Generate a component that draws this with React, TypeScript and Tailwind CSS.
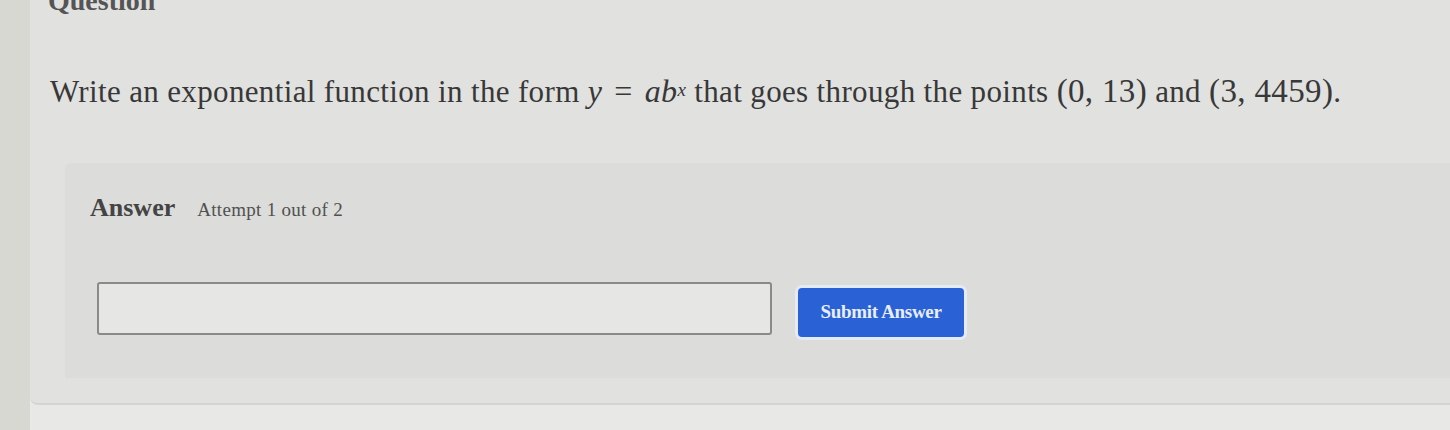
import React from "react";

const serif = "font-['Liberation_Serif',Georgia,serif]";

function MathVar({ children }: { children: React.ReactNode }) {
  return <span className="italic">{children}</span>;
}

function QuestionText() {
  return (
    <p className={`${serif} text-[31px] leading-[38px] text-[#383838] tracking-[0.35px]`}>
      Write an exponential function in the form{" "}
      <span className="text-[32px]">
        <MathVar>y</MathVar>
        <span className="mx-[12px]">=</span>
        <MathVar>ab</MathVar>
        <sup className="relative -top-[6px] text-[19px] italic">x</sup>
      </span>{" "}
      that goes through the points{" "}
      <span className="text-[33px]">(0, 13)</span> and{" "}
      <span className="text-[33px]">(3, 4459)</span>.
    </p>
  );
}

function AnswerPanel() {
  return (
    <div className="ml-[35px] mt-[52px] h-[215px] rounded-tl-md bg-[#dcdcdb] pl-[25px] pt-[25px]">
      <div className={`${serif} flex items-baseline gap-[22px] text-[#444]`}>
        <span className="text-[26px] font-bold">Answer</span>
        <span className="text-[19px] tracking-[0.3px] text-[#505050]">Attempt 1 out of 2</span>
      </div>
      <div className="mt-[55px] flex items-start gap-[26px] pl-[7px]">
        <div className="h-[53px] w-[675px] rounded-[3px] border-2 border-[#8a8a8a] bg-[#e6e6e5]" />
        <button
          className={`${serif} mt-[6px] h-[49px] w-[166px] rounded-[4px] bg-[#2a62d6] text-[19px] font-bold tracking-[-0.3px] text-[#e8eefc] shadow-[0_0_0_3px_#e4ebf5]`}
        >
          Submit Answer
        </button>
      </div>
    </div>
  );
}

export default function App() {
  return (
    <div className="flex h-[430px] w-full overflow-hidden bg-[#e8e8e7]">
      <div className="w-[30px] shrink-0 bg-[#d8d8d2]" />
      <div className="flex flex-1 flex-col">
        <div className="h-[405px] rounded-bl-lg border-b-2 border-[#d4d4d4] bg-[#e1e1e0]">
          <div className={`${serif} -mt-[20px] ml-[18px] text-[28px] font-bold text-[#555]`}>Question</div>
          <div className="ml-[20px] mt-[50px]">
            <QuestionText />
          </div>
          <AnswerPanel />
        </div>
      </div>
    </div>
  );
}
